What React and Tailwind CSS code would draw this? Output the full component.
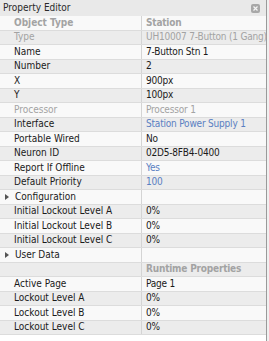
import React from 'react';

const rows = [
    { label: 'Object Type', value: 'Station', head: true },
    { label: 'Type', value: 'UH10007 7-Button (1 Gang)', muted: true },
    { label: 'Name', value: '7-Button Stn 1' },
    { label: 'Number', value: '2' },
    { label: 'X', value: '900px' },
    { label: 'Y', value: '100px' },
    { label: 'Processor', value: 'Processor 1', muted: true },
    { label: 'Interface', value: 'Station Power Supply 1', blue: true },
    { label: 'Portable Wired', value: 'No' },
    { label: 'Neuron ID', value: '02D5-8FB4-0400' },
    { label: 'Report If Offline', value: 'Yes', blue: true },
    { label: 'Default Priority', value: '100', blue: true },
    { label: 'Configuration', value: '', group: true },
    { label: 'Initial Lockout Level A', value: '0%' },
    { label: 'Initial Lockout Level B', value: '0%' },
    { label: 'Initial Lockout Level C', value: '0%' },
    { label: 'User Data', value: '', group: true },
    { label: '', value: 'Runtime Properties', head: true },
    { label: 'Active Page', value: 'Page 1' },
    { label: 'Lockout Level A', value: '0%' },
    { label: 'Lockout Level B', value: '0%' },
    { label: 'Lockout Level C', value: '0%' },
];

function Row({ row, index }) {
    const bg = index % 2 === 0 ? 'bg-[#f9f9f9]' : 'bg-[#ececec]';
    const labelColor = row.head || row.muted ? 'text-[#a3a3a3]' : 'text-[#1a1a1a]';
    const valueColor = row.head || row.muted
        ? 'text-[#a3a3a3]'
        : row.blue
            ? 'text-[#5a7fc2]'
            : 'text-[#1a1a1a]';
    const weight = row.head ? 'font-bold' : '';

    return (
        <div className={`flex h-[14.5px] items-center whitespace-nowrap border-b border-[#dcdcdc] ${bg}`}>
            <div className={`flex h-full w-[142px] shrink-0 items-center border-r border-[#d4d4d4] ${row.group ? 'pl-[5px]' : 'pl-[14px]'} ${labelColor} ${weight}`}>
                {row.group && (
                    <svg className="mr-[6px] h-[6px] w-[4px]" viewBox="0 0 4 6">
                        <path d="M0 0 L4 3 L0 6 Z" fill="#555" />
                    </svg>
                )}
                <span className="leading-none">{row.label}</span>
            </div>
            <div className={`min-w-0 pl-[4px] leading-none tracking-[-0.2px] ${valueColor} ${weight}`}>{row.value}</div>
        </div>
    );
}

export default function App() {
    return (
        <div className="h-[341px] w-[269px] bg-[#f0f0f0] text-[10px] font-['DejaVu_Sans_Condensed','Liberation_Sans',sans-serif]">
            <div className="h-full w-[267px] border-r border-[#9a9a9a] bg-white">
                <div className="flex h-[16px] items-center justify-between bg-[#e9e9e9] pl-[3px] pr-[6px] text-[#2a2a2a]">
                    <span className="leading-none">Property Editor</span>
                    <span className="flex h-[9px] w-[9px] items-center justify-center rounded-[2px] bg-[#a8a8a8]">
                        <svg className="h-[5px] w-[5px]" viewBox="0 0 5 5">
                            <path d="M0.5 0.5 L4.5 4.5 M4.5 0.5 L0.5 4.5" stroke="#f5f5f5" strokeWidth="1.2" />
                        </svg>
                    </span>
                </div>
                {rows.map((r, i) => (
                    <Row key={i} row={r} index={i} />
                ))}
            </div>
        </div>
    );
}
